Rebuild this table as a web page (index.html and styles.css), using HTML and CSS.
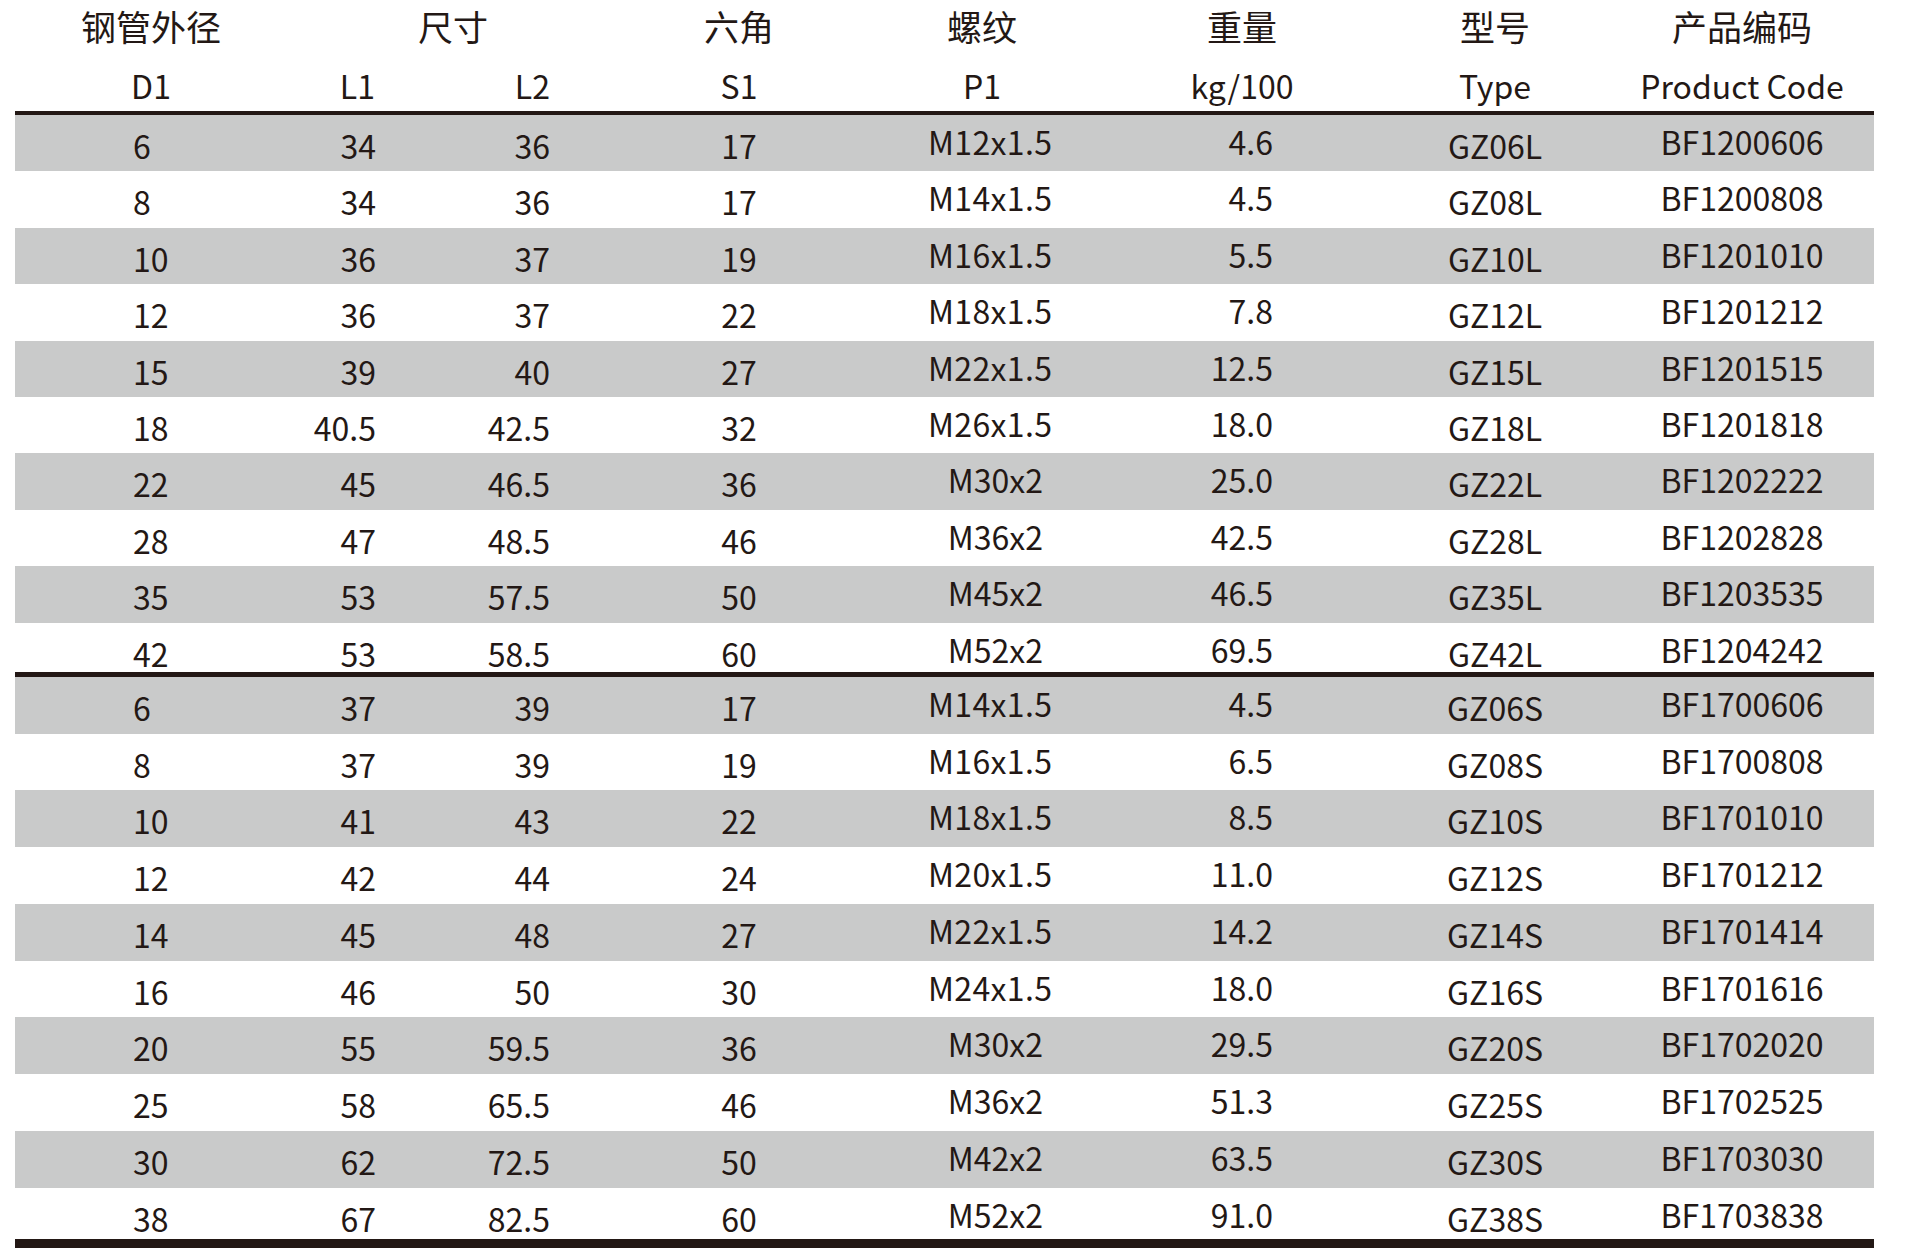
FILE: index.html
```html
<!DOCTYPE html>
<html lang="zh-CN">
<head>
<meta charset="utf-8">
<title>钢管外径 尺寸表</title>
<link rel="stylesheet" href="styles.css">
</head>
<body>
<div class="table">
  <div class="hrow h1">
    <div class="c1 hc">钢管外径</div>
    <div class="span23 hc">尺寸</div>
    <div class="c4 hc">六角</div>
    <div class="c5 hc">螺纹</div>
    <div class="c6 hc">重量</div>
    <div class="c7 hc">型号</div>
    <div class="c8 hc">产品编码</div>
  </div>
  <div class="hrow h2">
    <div class="c1 hl">D1</div>
    <div class="c2 hl">L1</div>
    <div class="c3 hl">L2</div>
    <div class="c4 hl">S1</div>
    <div class="c5 hl">P1</div>
    <div class="c6 hl">kg/100</div>
    <div class="c7 hl">Type</div>
    <div class="c8 hl">Product Code</div>
  </div>

  <div class="group g1">
    <div class="row"><div class="c1">6</div><div class="c2">34</div><div class="c3">36</div><div class="c4">17</div><div class="c5 up fine">M12x1.5</div><div class="c6 up">4.6</div><div class="c7">GZ06L</div><div class="c8 up">BF1200606</div></div>
    <div class="row"><div class="c1">8</div><div class="c2">34</div><div class="c3">36</div><div class="c4">17</div><div class="c5 up fine">M14x1.5</div><div class="c6 up">4.5</div><div class="c7">GZ08L</div><div class="c8 up">BF1200808</div></div>
    <div class="row"><div class="c1">10</div><div class="c2">36</div><div class="c3">37</div><div class="c4">19</div><div class="c5 up fine">M16x1.5</div><div class="c6 up">5.5</div><div class="c7">GZ10L</div><div class="c8 up">BF1201010</div></div>
    <div class="row"><div class="c1">12</div><div class="c2">36</div><div class="c3">37</div><div class="c4">22</div><div class="c5 up fine">M18x1.5</div><div class="c6 up">7.8</div><div class="c7">GZ12L</div><div class="c8 up">BF1201212</div></div>
    <div class="row"><div class="c1">15</div><div class="c2">39</div><div class="c3">40</div><div class="c4">27</div><div class="c5 up fine">M22x1.5</div><div class="c6 up">12.5</div><div class="c7">GZ15L</div><div class="c8 up">BF1201515</div></div>
    <div class="row"><div class="c1">18</div><div class="c2">40.5</div><div class="c3">42.5</div><div class="c4">32</div><div class="c5 up fine">M26x1.5</div><div class="c6 up">18.0</div><div class="c7">GZ18L</div><div class="c8 up">BF1201818</div></div>
    <div class="row"><div class="c1">22</div><div class="c2">45</div><div class="c3">46.5</div><div class="c4">36</div><div class="c5 up">M30x2</div><div class="c6 up">25.0</div><div class="c7">GZ22L</div><div class="c8 up">BF1202222</div></div>
    <div class="row"><div class="c1">28</div><div class="c2">47</div><div class="c3">48.5</div><div class="c4">46</div><div class="c5 up">M36x2</div><div class="c6 up">42.5</div><div class="c7">GZ28L</div><div class="c8 up">BF1202828</div></div>
    <div class="row"><div class="c1">35</div><div class="c2">53</div><div class="c3">57.5</div><div class="c4">50</div><div class="c5 up">M45x2</div><div class="c6 up">46.5</div><div class="c7">GZ35L</div><div class="c8 up">BF1203535</div></div>
    <div class="row"><div class="c1">42</div><div class="c2">53</div><div class="c3">58.5</div><div class="c4">60</div><div class="c5 up">M52x2</div><div class="c6 up">69.5</div><div class="c7">GZ42L</div><div class="c8 up">BF1204242</div></div>
  </div>

  <div class="group g2">
    <div class="row"><div class="c1">6</div><div class="c2">37</div><div class="c3">39</div><div class="c4">17</div><div class="c5 up fine">M14x1.5</div><div class="c6 up">4.5</div><div class="c7">GZ06S</div><div class="c8 up">BF1700606</div></div>
    <div class="row"><div class="c1">8</div><div class="c2">37</div><div class="c3">39</div><div class="c4">19</div><div class="c5 up fine">M16x1.5</div><div class="c6 up">6.5</div><div class="c7">GZ08S</div><div class="c8 up">BF1700808</div></div>
    <div class="row"><div class="c1">10</div><div class="c2">41</div><div class="c3">43</div><div class="c4">22</div><div class="c5 up fine">M18x1.5</div><div class="c6 up">8.5</div><div class="c7">GZ10S</div><div class="c8 up">BF1701010</div></div>
    <div class="row"><div class="c1">12</div><div class="c2">42</div><div class="c3">44</div><div class="c4">24</div><div class="c5 up fine">M20x1.5</div><div class="c6 up">11.0</div><div class="c7">GZ12S</div><div class="c8 up">BF1701212</div></div>
    <div class="row"><div class="c1">14</div><div class="c2">45</div><div class="c3">48</div><div class="c4">27</div><div class="c5 up fine">M22x1.5</div><div class="c6 up">14.2</div><div class="c7">GZ14S</div><div class="c8 up">BF1701414</div></div>
    <div class="row"><div class="c1">16</div><div class="c2">46</div><div class="c3">50</div><div class="c4">30</div><div class="c5 up fine">M24x1.5</div><div class="c6 up">18.0</div><div class="c7">GZ16S</div><div class="c8 up">BF1701616</div></div>
    <div class="row"><div class="c1">20</div><div class="c2">55</div><div class="c3">59.5</div><div class="c4">36</div><div class="c5 up">M30x2</div><div class="c6 up">29.5</div><div class="c7">GZ20S</div><div class="c8 up">BF1702020</div></div>
    <div class="row"><div class="c1">25</div><div class="c2">58</div><div class="c3">65.5</div><div class="c4">46</div><div class="c5 up">M36x2</div><div class="c6 up">51.3</div><div class="c7">GZ25S</div><div class="c8 up">BF1702525</div></div>
    <div class="row"><div class="c1">30</div><div class="c2">62</div><div class="c3">72.5</div><div class="c4">50</div><div class="c5 up">M42x2</div><div class="c6 up">63.5</div><div class="c7">GZ30S</div><div class="c8 up">BF1703030</div></div>
    <div class="row"><div class="c1">38</div><div class="c2">67</div><div class="c3">82.5</div><div class="c4">60</div><div class="c5 up">M52x2</div><div class="c6 up">91.0</div><div class="c7">GZ38S</div><div class="c8 up">BF1703838</div></div>
  </div>
</div>
</body>
</html>
```

FILE: styles.css
```css
html, body {
  margin: 0;
  padding: 0;
  background: #ffffff;
}

body {
  font-family: "Noto Sans CJK SC", "Noto Sans", sans-serif;
  color: #231815;
}

.table {
  width: 1859px;
  margin-left: 15px;
}

.hrow,
.row {
  display: grid;
  grid-template-columns: 272px 89px 174px 378px 115px 398px 108px 325px;
  white-space: nowrap;
}

.h1 {
  height: 56px;
  font-size: 35px;
  line-height: 51px;
}

.h2 {
  height: 55px;
  font-size: 32px;
  line-height: 55px;
}

.h2 > div {
  padding-top: 1.5px;
}

.hc, .hl {
  text-align: center;
}

.span23 {
  grid-column: 2 / 4;
  padding-left: 69px;
}

.group .row {
  font-size: 32px;
}

.group .row > div {
  padding-top: 2px;
}

.g1 {
  border-top: 4px solid #231815;
}

.g1 .row {
  height: 56.4px;
  line-height: 56.4px;
}

.g1 .row:last-child {
  height: 49.4px;
}

.g2 {
  border-top: 5px solid #231815;
  border-bottom: 9px solid #231815;
}

.g2 .row {
  height: 56.75px;
  line-height: 56.75px;
}

.g2 .row:last-child {
  height: 51.25px;
}

.group .row:nth-child(odd) {
  background: #c9caca;
}

.row .c1 { text-align: left; padding-left: 118px; }
.row .c2, .row .c3, .row .c5 { text-align: right; }
.row .c4, .row .c7 { text-align: center; }
.row .c6 { text-align: right; padding-right: 168px; }
.row .c8 { text-align: center; padding-left: 61px; }

.row .fine {
  padding-right: 6px;
  letter-spacing: 0.35px;
}

.hrow .c2 { text-align: right; padding-right: 1px; }
.hrow .c3 { text-align: right; }
.hrow .c5 { padding-right: 7px; }
.hrow .c8 { padding-left: 61px; }

.up {
  margin-top: -4px;
}
```
